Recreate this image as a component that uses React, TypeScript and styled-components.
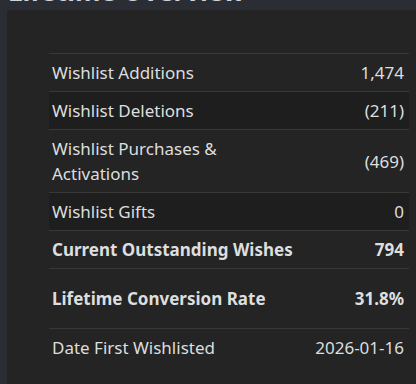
import React from 'react';
import styled, { createGlobalStyle } from 'styled-components';

const GlobalStyle = createGlobalStyle`
  html, body {
    margin: 0;
    padding: 0;
    background: #2a2d34;
    overflow: hidden;
  }
  body {
    font-family: "Noto Sans", "Open Sans", Arial, sans-serif;
  }
`;

const Page = styled.div`
  padding: 0 0 0 7px;
  margin-top: -25px;
`;

const Title = styled.h2`
  margin: 0;
  height: 35px;
  font-size: 26px;
  line-height: 32px;
  font-weight: 700;
  color: #d0d3d8;
  padding-left: 1px;
`;

const Panel = styled.div`
  width: 460px;
  min-height: 400px;
  background: #242424;
  padding: 43px 0 0 42px;
  box-sizing: border-box;
`;

const Table = styled.div`
  width: 360px;
  display: flex;
  flex-direction: column;
`;

const Row = styled.div<{ $shade?: boolean; $tall?: boolean }>`
  display: flex;
  align-items: center;
  justify-content: space-between;
  gap: 16px;
  border-top: 1px solid #383838;
  background: ${(p) => (p.$shade ? '#1e1e1e' : 'transparent')};
  padding: ${(p) => (p.$tall ? '17px' : '6px')} 5px ${(p) => (p.$tall ? '17px' : '6px')} 3px;
  font-size: 17px;
  line-height: 25px;
  color: #dcdedf;
`;

const Label = styled.span<{ $bold?: boolean }>`
  font-weight: ${(p) => (p.$bold ? 700 : 400)};
  max-width: 250px;
`;

const Value = styled.span<{ $bold?: boolean }>`
  font-weight: ${(p) => (p.$bold ? 700 : 400)};
  text-align: right;
  white-space: nowrap;
`;

type Stat = { label: string; value: string; bold?: boolean; shade?: boolean; tall?: boolean };

const stats: Stat[] = [
  { label: 'Wishlist Additions', value: '1,474' },
  { label: 'Wishlist Deletions', value: '(211)', shade: true },
  { label: 'Wishlist Purchases & Activations', value: '(469)' },
  { label: 'Wishlist Gifts', value: '0', shade: true },
  { label: 'Current Outstanding Wishes', value: '794', bold: true },
  { label: 'Lifetime Conversion Rate', value: '31.8%', bold: true, tall: true },
  { label: 'Date First Wishlisted', value: '2026-01-16' },
];

export default function App() {
  return (
    <>
      <GlobalStyle />
      <Page>
        <Title>Lifetime Overview</Title>
        <Panel>
          <Table>
            {stats.map((s) => (
              <Row key={s.label} $shade={s.shade} $tall={s.tall}>
                <Label $bold={s.bold}>{s.label}</Label>
                <Value $bold={s.bold}>{s.value}</Value>
              </Row>
            ))}
          </Table>
        </Panel>
      </Page>
    </>
  );
}
